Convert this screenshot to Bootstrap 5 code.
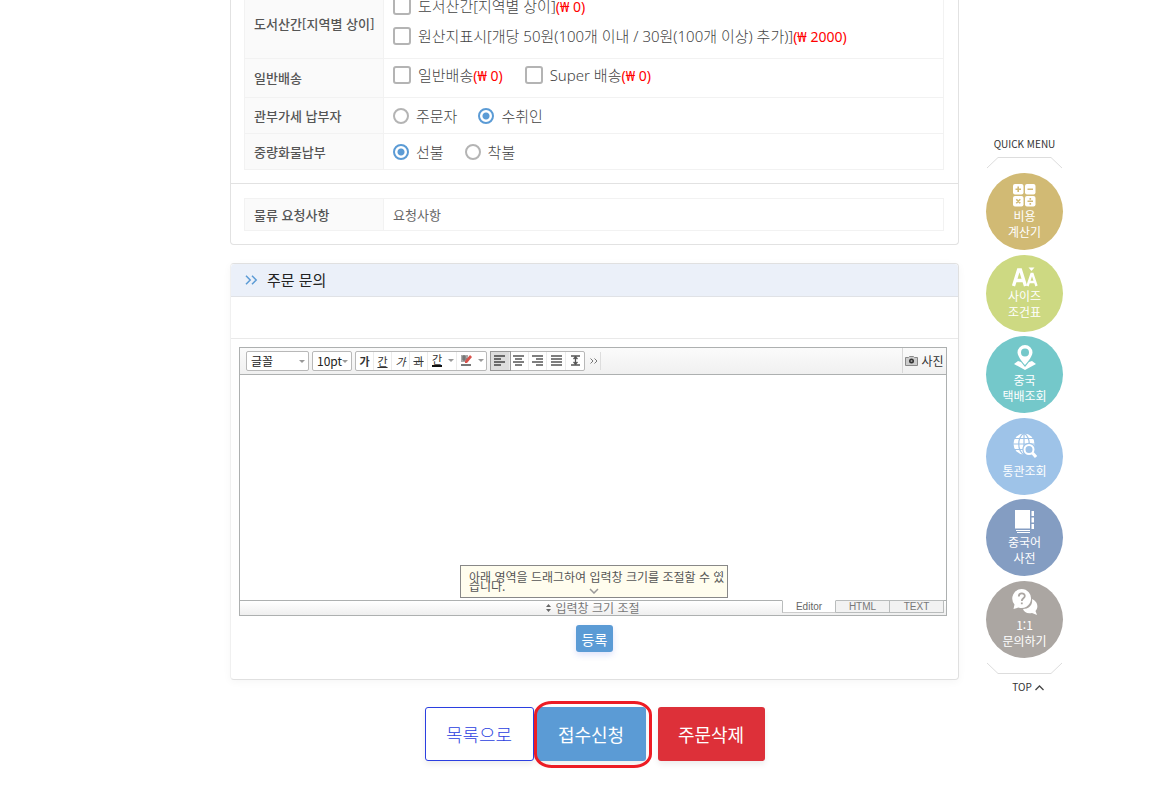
<!DOCTYPE html>
<html lang="ko">
<head>
<meta charset="utf-8">
<meta name="viewport" content="width=device-width, initial-scale=1">
<title>주문 문의</title>
<link href="https://cdn.jsdelivr.net/npm/bootstrap@5.3.0/dist/css/bootstrap.min.css" rel="stylesheet">
<style>
body{font-family:"Noto Sans CJK KR",sans-serif;font-size:15px;color:#666;background:#fff}
/* page frame */
.page{padding-left:230px;padding-right:88px;padding-bottom:24px;gap:27px}
.main-col{min-width:0;margin-top:-11px}
.quick{width:77px;padding-top:136px;font-size:10px;line-height:16px;color:#333}
/* panels */
.panel{border:1px solid #e2e2e2;border-radius:4px}
.panel-top{border-top:0;border-radius:0 0 4px 4px;margin-bottom:18px}
.panel-part{padding:14px 14px 13px 13px}
.panel-part + .panel-part{border-top:1px solid #e2e2e2}
.panel-part:first-child{padding-top:0}
.inquiry{box-shadow:0 2px 8px rgba(0,0,0,.04);border-color:#e0e0e0;border-left-color:#f0f0f0}
.inquiry-head{height:33px;background:#ebf0f9;border-bottom:1px solid #e0e2e6;padding-left:14px;gap:9px;border-radius:4px 4px 0 0;color:#222}
.inquiry-head h2{font-size:15px;font-weight:400;line-height:20px}
.inquiry-blank{height:42px;border-bottom:1px solid #e9e9e9}
/* option table */
.info{width:100%;border-collapse:collapse;table-layout:fixed}
.info th,.info td{border:1px solid #f2f2f2;padding:0 9px;vertical-align:middle;line-height:20px}
.info th{width:139px;background:#fafafa;font-size:13px;font-weight:500;color:#555;white-space:nowrap}
.row-tall{height:69px}.row-mid{height:39px}.row-low{height:36px}.row-note{height:32px}
.row-note td{font-size:13px}
.checks{gap:10px 22px;padding-bottom:6px}
.radios{gap:21px}
.opt{gap:7px;height:20px;font-family:"Noto Sans","Noto Sans CJK KR",sans-serif;font-weight:300;color:#444}
.opt .price{font-size:14px;font-weight:400;color:#f00}
.opt input{appearance:none;flex:none;margin:0;width:18px;height:18px;border:2px solid #b4b4b4;border-radius:3px;background:#fff}
.opt input[type=radio]{width:16px;height:16px;border-radius:50%}
.opt input[type=radio]:checked{border-color:#5b9bd5;background:radial-gradient(circle,#5b9bd5 0 3px,#fff 4px)}
/* rich text editor */
.editor{margin:8px 11px 0 8px;border:1px solid #adb0b0;font-size:12px;color:#333}
.toolbar{height:27px;background:linear-gradient(#fbfbfb,#f0f0f0);border-bottom:1px solid #adb0b0;padding:0 0 1px 6px;gap:3px}
.pick{position:relative}
.pick select{display:block;appearance:none;width:100%;height:20px;border:1px solid #b8b8b8;border-radius:2px;background:#fff;font-size:12px;line-height:16px;padding:0 4px;color:#222}
.pick::after,.drop::after{content:"";border:3px solid transparent;border-top-color:#999;border-bottom:0}
.pick::after{position:absolute;right:4px;top:9px;pointer-events:none}
.pick-font{width:63px}.pick-size{width:40px}
.tools{height:20px;border:1px solid #b8b8b8;border-radius:2px;background:#fff}
.tools button,.more,.photo{border:0;background:none;padding:0;color:#333;font-size:11px;line-height:16px}
.tools button{width:18px;border-right:1px solid #ebebeb;display:flex;align-items:center;justify-content:center}
.tools button:last-child{border-right:0}
.tools .drop{width:11px}
.tools .drop-for{border-right:0}
.aligns{width:95px}
.aligns button{flex:1}
.aligns .active{background:#ddd;box-shadow:0 0 0 1px #999}
.underbar{border-bottom:2px solid #111;line-height:11px}
.more{width:13px;border-right:1px solid #ddd;height:18px}
.photo{width:44px;height:25px;border-left:1px solid #d8d8d8;gap:3px;font-size:12px;white-space:nowrap}
.canvas{height:225px}
.canvas textarea{width:100%;height:100%;border:0;resize:none;display:block;outline:0}
.hint{position:absolute;left:50%;bottom:2px;transform:translateX(-50%);margin-left:1px;width:268px;height:33px;padding:6px 3px 0 8px;border:1px solid #888;background:#fffdee;font-size:12px;line-height:9px;color:#555;white-space:nowrap}
.hint button{position:absolute;right:4px;top:4px;border:0;background:none;padding:0;line-height:12px}
.hint button svg{display:block}
.hint-arrow{position:absolute;left:128px;bottom:3px}
.statusbar{height:15px;border-top:1px solid #adb0b0;background:linear-gradient(#fff,#efefef);color:#777;position:relative}
.resize{border:0;background:none;padding:0;font-size:12px;line-height:14px;color:#777;gap:4px}
.modes{position:absolute;right:2px;top:-1px;font:10px/12px "Liberation Sans",sans-serif}
.modes button{width:54px;height:13px;border:1px solid #b9bcbc;border-left-width:0;background:#f2f2f2;color:#777;padding:0}
.modes .active{border-color:#fff #b9bcbc #ccc;border-left:1px solid #b9bcbc;background:#fff;color:#666}
/* buttons */
.btn-save{background:#5b9bd5;color:#fff;font-size:14px;line-height:20px;height:27px;padding:3px 6px;border:0;border-radius:3px;box-shadow:0 3px 6px rgba(90,110,230,.2);margin:9px 0 27px}
.actions{margin-top:27px}
.actions .btn{height:54px;width:109px;padding:0;border-radius:3px;font-size:18px;font-weight:300;box-shadow:0 3px 6px rgba(0,0,0,.08)}
.btn-list{border:1px solid #2b3fe0;color:#2b3fe0;background:#fff}
.actions .btn-apply,.actions .btn-apply:hover{background:#5b9bd5;color:#fff;border:0;font-weight:400}
.actions .btn-drop{width:107px;background:#dd3039;color:#fff;border:0;font-weight:400}
.marked{position:relative;margin:0 12px 0 3px}
.marked::after{content:"";position:absolute;inset:-6px -6px -7px -3px;border:3px solid #ed1c24;border-radius:18px/14px;pointer-events:none}
/* quick menu */
.quick-list{height:485px;margin:4px 0}
.bubble{width:77px;height:77px;border-radius:50%;color:#fff;font-size:12px;line-height:16px;text-decoration:none}
.bubble svg{margin-bottom:1px}
.q1{background:#d1ba74}.q2{background:#cdd982}.q3{background:#74c8ca}.q4{background:#9ec3e8}.q5{background:#849dc2}.q6{background:#aba6a2}
.top-link{color:#333;text-decoration:none;padding-left:7px}
</style>
</head>
<body>
<div class="page d-flex align-items-start">
<main class="main-col flex-grow-1">
  <section class="panel panel-top">
    <div class="panel-part">
      <table class="info">
        <tr class="row-tall"><th scope="row">도서산간[지역별 상이]</th><td>
          <div class="checks d-flex flex-column">
            <label class="opt d-flex align-items-center"><input type="checkbox"><span>도서산간[지역별 상이]<span class="price">(₩ 0)</span></span></label>
            <label class="opt d-flex align-items-center"><input type="checkbox"><span>원산지표시[개당 50원(100개 이내 / 30원(100개 이상) 추가)]<span class="price">(₩ 2000)</span></span></label>
          </div></td></tr>
        <tr class="row-mid"><th scope="row">일반배송</th><td>
          <div class="checks d-flex">
            <label class="opt d-flex align-items-center"><input type="checkbox"><span>일반배송<span class="price">(₩ 0)</span></span></label>
            <label class="opt d-flex align-items-center"><input type="checkbox"><span>Super 배송<span class="price">(₩ 0)</span></span></label>
          </div></td></tr>
        <tr class="row-low"><th scope="row">관부가세 납부자</th><td>
          <div class="radios d-flex">
            <label class="opt d-flex align-items-center"><input type="radio" name="tax">주문자</label>
            <label class="opt d-flex align-items-center"><input type="radio" name="tax" checked>수취인</label>
          </div></td></tr>
        <tr class="row-low"><th scope="row">중량화물납부</th><td>
          <div class="radios d-flex">
            <label class="opt d-flex align-items-center"><input type="radio" name="freight" checked>선불</label>
            <label class="opt d-flex align-items-center"><input type="radio" name="freight">착불</label>
          </div></td></tr>
      </table>
    </div>
    <div class="panel-part">
      <table class="info"><tr class="row-note"><th scope="row">물류 요청사항</th><td>요청사항</td></tr></table>
    </div>
  </section>

  <section class="panel inquiry">
    <header class="inquiry-head d-flex align-items-center">
      <svg width="13" height="10" viewBox="0 0 13 10" fill="none" stroke="#5b9bd5" stroke-width="1.5"><path d="M1 .8 5.2 5 1 9.200M7 .8 11.200 5 7 9.200"/></svg>
      <h2 class="mb-0">주문 문의</h2>
    </header>
    <div class="inquiry-blank"></div>
    <div class="editor">
      <div class="toolbar d-flex align-items-center">
        <div class="pick pick-font"><select aria-label="글꼴"><option>글꼴</option></select></div>
        <div class="pick pick-size"><select aria-label="크기"><option>10pt</option></select></div>
        <div class="tools d-flex">
          <button type="button"><b>가</b></button>
          <button type="button"><u>간</u></button>
          <button type="button"><i>가</i></button>
          <button type="button"><s>과</s></button>
          <button type="button" class="drop-for"><span class="underbar">간</span></button><button type="button" class="drop" aria-label="글자색"></button>
          <button type="button" class="drop-for" aria-label="배경색"><svg width="12" height="13" viewBox="0 0 12 13"><path d="M1 1h7v7H1z" fill="#aaa"/><path d="M2 3h4M2 5h5M4 1v6" stroke="#666" fill="none"/><path d="m5 7 5-6 2 2-5 6-2 0z" fill="#d9524c"/><path d="M1 11h10" stroke="#777" stroke-width="2"/></svg></button><button type="button" class="drop" aria-label="배경색 선택"></button>
        </div>
        <div class="tools aligns d-flex">
          <button type="button" class="active" aria-label="왼쪽"><svg width="11" height="11" stroke="#444" stroke-width="1.500"><path d="M0 1h11M0 4h7M0 7h11M0 10h7"/></svg></button>
          <button type="button" aria-label="가운데"><svg width="11" height="11" stroke="#555" stroke-width="1.500"><path d="M0 1h11M2 4h7M0 7h11M2 10h7"/></svg></button>
          <button type="button" aria-label="오른쪽"><svg width="11" height="11" stroke="#555" stroke-width="1.500"><path d="M0 1h11M4 4h7M0 7h11M4 10h7"/></svg></button>
          <button type="button" aria-label="양쪽"><svg width="11" height="11" stroke="#555" stroke-width="1.500"><path d="M0 1h11M0 4h11M0 7h11M0 10h11"/></svg></button>
          <button type="button" aria-label="줄 간격"><svg width="11" height="11" stroke="#555" fill="none" stroke-width="1.300"><path d="M1 1h9M1 10h9M5.500 2v7M3.500 4l2-2 2 2M3.500 7l2 2 2-2"/></svg></button>
        </div>
        <button type="button" class="more d-flex align-items-center justify-content-center" aria-label="더보기"><svg width="8" height="6" fill="none" stroke="#777"><path d="m.5.5 2.500 2.500L.5 5.500M4.500.5 7 3 4.500 5.500"/></svg></button>
        <button type="button" class="photo ms-auto d-flex align-items-center justify-content-center"><svg width="13" height="11" viewBox="0 0 13 11"><path d="M.5 2.500h3l1-1h4l1 1h3v8H.5z" fill="#ccc" stroke="#888"/><circle cx="6.500" cy="6" r="2.500" fill="#333"/><circle cx="6.500" cy="6" r="1" fill="#999"/></svg>사진</button>
      </div>
      <div class="canvas position-relative">
        <textarea aria-label="문의 내용"></textarea>
        <div class="hint">아래 영역을 드래그하여 입력창 크기를 조절할 수 있<br>습니다.<button type="button" aria-label="닫기"><svg width="8" height="8" fill="none" stroke="#999"><path d="m1 1 6 6M7 1 1 7"/></svg></button>
          <svg class="hint-arrow" width="10" height="6" fill="none" stroke="#999" stroke-width="1.500"><path d="m1 1 4 4 4-4"/></svg></div>
      </div>
      <div class="statusbar d-flex justify-content-center">
        <button type="button" class="resize d-flex align-items-center"><svg width="5" height="8" fill="#666"><path d="M0 3 2.500 0 5 3zM0 5l2.500 3L5 5z"/></svg>입력창 크기 조절</button>
        <div class="modes d-flex"><button type="button" class="active">Editor</button><button type="button">HTML</button><button type="button">TEXT</button></div>
      </div>
    </div>
    <div class="text-center"><button type="button" class="btn btn-save">등록</button></div>
  </section>

  <div class="actions d-flex justify-content-center">
    <button type="button" class="btn btn-list">목록으로</button>
    <div class="marked"><button type="button" class="btn btn-apply">접수신청</button></div>
    <button type="button" class="btn btn-drop">주문삭제</button>
  </div>
</main>

<aside class="quick text-center flex-shrink-0">
  <div>QUICK MENU</div>
  <svg class="d-block mt-1" width="77" height="13" fill="none" stroke="#ddd"><path d="M1 12 12 1.500H65L76 12"/></svg>
  <nav class="quick-list d-flex flex-column justify-content-between" aria-label="퀵 메뉴">
    <a href="#" class="bubble q1 d-flex flex-column align-items-center justify-content-center"><svg width="23" height="23" viewBox="0 0 23 23"><g fill="#fff"><rect width="10.500" height="10.500" rx="2"/><rect x="12" width="10.500" height="10.500" rx="2"/><rect y="12" width="10.500" height="10.500" rx="2"/><rect x="12" y="12" width="10.500" height="10.500" rx="2"/></g><path d="M2.500 5.200h5.500M5.200 2.500v5.500M14.500 5.200h5.500M3.300 15.300l4 4M7.300 15.300l-4 4M14.500 17.300h5.500M17.300 14v1.700M17.300 19v1.700" stroke="#d1ba74" stroke-width="1.600"/></svg><span>비용<br>계산기</span></a>
    <a href="#" class="bubble q2 d-flex flex-column align-items-center justify-content-center"><svg width="26" height="20" viewBox="0 0 26 20" fill="none" stroke="#fff"><path d="M1.500 19 6.500 3h2l5 16M4 13.500h7" stroke-width="3.300"/><path d="M15.500 19l4-12h1l4 12M17.500 15h5.500" stroke-width="2.400"/><path d="M16.500.5h6L19.500 4z" fill="#fff" stroke="none"/></svg><span>사이즈<br>조건표</span></a>
    <a href="#" class="bubble q3 d-flex flex-column align-items-center justify-content-center"><svg width="24" height="26" viewBox="0 0 24 26"><path d="M5 16 1 19l11 6 11-6-4-3-3 1-4 5-4-5z" fill="#fff"/><path fill-rule="evenodd" d="M12 0a7.500 7.500 0 0 1 7.500 7.500C19.500 12 12 20 12 20S4.500 12 4.500 7.500A7.500 7.500 0 0 1 12 0zm0 3.500a4 4 0 1 0 0 8 4 4 0 0 0 0-8z" fill="#fff"/></svg><span>중국<br>택배조회</span></a>
    <a href="#" class="bubble q4 d-flex flex-column align-items-center justify-content-center"><svg class="mb-1" width="24" height="26" viewBox="0 0 24 26"><circle cx="11" cy="11" r="10.500" fill="#fff"/><path d="M11 0v22M0 11h22M2 5.500h18M2 16.500h18M11 0C4 5 4 17 11 22M11 0c7 5 7 17 0 22" stroke="#9ec3e8" fill="none" stroke-width="1.200"/><circle cx="16" cy="16.500" r="5" fill="#9ec3e8" stroke="#9ec3e8" stroke-width="3.500"/><path d="m19.500 20 3.500 4" stroke="#fff" stroke-width="3"/><circle cx="16" cy="16.500" r="4.500" fill="#9ec3e8" stroke="#fff" stroke-width="2"/></svg><span>통관조회</span></a>
    <a href="#" class="bubble q5 d-flex flex-column align-items-center justify-content-center"><svg width="21" height="23" viewBox="0 0 21 23" fill="#fff"><path d="M1 0h15v18.500H1zM2 20h14v1H2zM3 22h13v1H3zM17.500 1H20v5h-2.500zM17.500 7.500H20v5h-2.500zM17.500 14H20v5h-2.500z"/></svg><span>중국어<br>사전</span></a>
    <a href="#" class="bubble q6 d-flex flex-column align-items-center justify-content-center"><svg width="26" height="27" viewBox="0 0 26 27"><path d="M20 10c7 3 6 10 3.500 12l1.500 4-5-2c-5 1-8-1-9-4 6 0 10-4 9-10z" fill="#fff"/><path d="M9.500 0a9.500 9.500 0 1 1-3 18.500L1.500 20l1-4.500A9.500 9.500 0 0 1 9.500 0z" fill="#fff"/><path d="M6.800 7.500c0-4 6-4 6-.500 0 2.500-3 2-3 5M9.800 13.500v1.800" stroke="#aba6a2" stroke-width="1.800" fill="none"/></svg><span>1:1<br>문의하기</span></a>
  </nav>
  <svg class="d-block" width="77" height="13" fill="none" stroke="#ddd"><path d="M1 1 12 11.500H65L76 1"/></svg>
  <a href="#" class="top-link d-block mt-1">TOP <svg width="9" height="6" fill="none" stroke="#444" stroke-width="1.300"><path d="m.5 5 4-4 4 4"/></svg></a>
</aside>
</div>
<script src="https://cdn.jsdelivr.net/npm/bootstrap@5.3.0/dist/js/bootstrap.bundle.min.js"></script>
</body>
</html>
